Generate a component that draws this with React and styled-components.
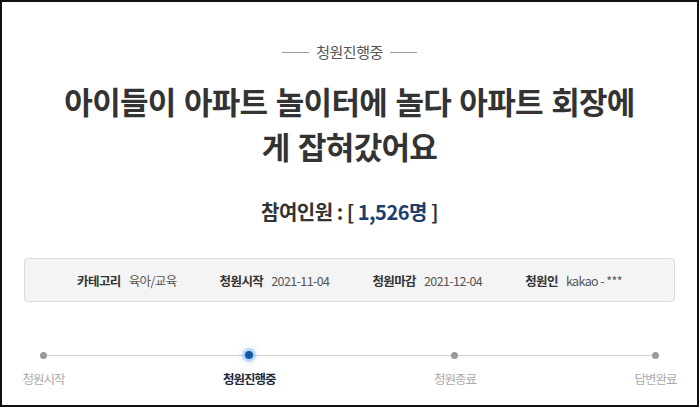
import React from 'react'
import styled, { createGlobalStyle } from 'styled-components'

const GlobalStyle = createGlobalStyle`
  html, body {
    margin: 0;
    padding: 0;
    background: #fff;
  }
  body {
    font-family: "Noto Sans CJK KR", "Noto Sans", sans-serif;
  }
`

const Frame = styled.div`
  box-sizing: border-box;
  width: 699px;
  height: 407px;
  border: 2px solid #111;
  padding-top: 39px;
  display: flex;
  flex-direction: column;
  align-items: center;
  overflow: hidden;
`

const Status = styled.div`
  display: flex;
  align-items: center;
  gap: 7px;
  font-size: 15px;
  line-height: 22px;
  color: #555;
  letter-spacing: -0.5px;
  &::before,
  &::after {
    content: '';
    width: 27px;
    height: 1px;
    background: #999;
  }
`

const Title = styled.h1`
  margin: 15px 0 0;
  font-size: 31px;
  line-height: 45px;
  font-weight: 700;
  color: #333;
  letter-spacing: -0.7px;
  word-spacing: 2px;
  text-align: center;
  white-space: nowrap;
`

const Count = styled.div`
  margin-top: 30px;
  font-size: 20px;
  line-height: 28px;
  font-weight: 700;
  color: #333;
  letter-spacing: -0.5px;
  span {
    color: #1c3d6e;
  }
`

const InfoBox = styled.div`
  box-sizing: border-box;
  margin-top: 32px;
  width: 651px;
  height: 44px;
  background: #f4f4f4;
  border: 1px solid #ddd;
  border-radius: 4px;
  display: flex;
  align-items: center;
  justify-content: center;
  gap: 43px;
`

const InfoItem = styled.div`
  display: flex;
  align-items: center;
  gap: 8px;
  font-size: 12.5px;
  letter-spacing: -0.6px;
  white-space: nowrap;
`

const InfoLabel = styled.span`
  font-weight: 700;
  color: #333;
`

const InfoValue = styled.span`
  color: #555;
`

const Progress = styled.div`
  position: relative;
  margin-top: 49px;
  width: 654px;
  display: flex;
  justify-content: space-between;
  &::before {
    content: '';
    position: absolute;
    top: 4px;
    left: 20px;
    right: 22px;
    height: 1px;
    background: #d0d0d0;
  }
`

const Step = styled.div`
  position: relative;
  display: flex;
  flex-direction: column;
  align-items: center;
  gap: 11px;
`

const Dot = styled.div`
  width: ${p => (p.$active ? 8 : 7)}px;
  height: ${p => (p.$active ? 8 : 7)}px;
  margin-top: ${p => (p.$active ? 0 : 0.5)}px;
  border-radius: 50%;
  background: ${p => (p.$active ? '#0b5aa5' : '#9a9a9a')};
  box-shadow: ${p => (p.$active ? '0 0 0 3px rgba(110,170,240,0.35), 0 0 6px 3px rgba(110,170,240,0.3)' : 'none')};
`

const StepLabel = styled.div`
  font-size: 12.5px;
  line-height: 18px;
  letter-spacing: -1px;
  white-space: nowrap;
  color: ${p => (p.$active ? '#1f2a3a' : '#aaa')};
  font-weight: ${p => (p.$active ? 700 : 400)};
`

const info = [
  ['카테고리', '육아/교육'],
  ['청원시작', '2021-11-04'],
  ['청원마감', '2021-12-04'],
  ['청원인', 'kakao - ***'],
]

const steps = ['청원시작', '청원진행중', '청원종료', '답변완료']

export default function App () {
  return (
    <>
      <GlobalStyle />
      <Frame>
        <Status>청원진행중</Status>

        <Title>
          아이들이 아파트 놀이터에 놀다 아파트 회장에
          <br />
          게 잡혀갔어요
        </Title>

        <Count>참여인원 : [ <span>1,526명</span> ]</Count>

        <InfoBox>
          {info.map(([label, value]) => (
            <InfoItem key={label}>
              <InfoLabel>{label}</InfoLabel>
              <InfoValue>{value}</InfoValue>
            </InfoItem>
          ))}
        </InfoBox>

        <Progress>
          {steps.map((s, i) => (
            <Step key={s}>
              <Dot $active={i === 1} />
              <StepLabel $active={i === 1}>{s}</StepLabel>
            </Step>
          ))}
        </Progress>
      </Frame>
    </>
  )
}
